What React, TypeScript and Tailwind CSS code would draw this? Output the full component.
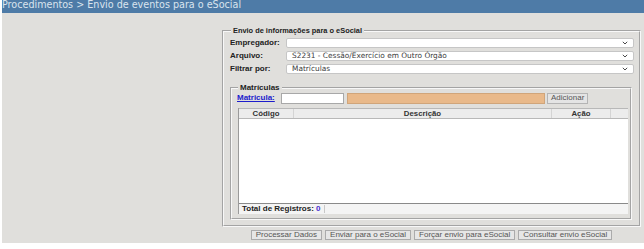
import React from 'react';

const rows = [
  { label: 'Empregador:', value: '' },
  { label: 'Arquivo:', value: 'S2231 - Cessão/Exercício em Outro Órgão' },
  { label: 'Filtrar por:', value: 'Matrículas' },
];

const actions = ['Processar Dados', 'Enviar para o eSocial', 'Forçar envio para eSocial', 'Consultar envio eSocial'];

function Chevron() {
  return (
    <svg width="6" height="4" viewBox="0 0 6 4" className="shrink-0">
      <path d="M0.8 0.8 L3 3 L5.2 0.8" fill="none" stroke="#4a4a4a" strokeWidth="1" />
    </svg>
  );
}

function SelectBox({ value }: { value: string }) {
  return (
    <div className="flex-1 h-[10px] flex items-center justify-between bg-white border border-[#c6c6c6] rounded-[2px] pl-[5px] pr-[5px]">
      <span className="font-['DejaVu_Sans',sans-serif] text-[7.4px] leading-none text-[#3a3a3a]">{value}</span>
      <Chevron />
    </div>
  );
}

export default function App() {
  return (
    <div className="w-[644px] h-[249px] bg-white pl-[2px] font-['Liberation_Sans',Arial,sans-serif]">
      {/* Header */}
      <header className="h-[13px] bg-[#4e7ba7] overflow-hidden">
        <p className="font-['DejaVu_Sans',sans-serif] text-[9.6px] leading-[10px] text-[#dae4ee] whitespace-nowrap">
          Procedimentos &gt; Envio de eventos para o eSocial
        </p>
      </header>

      {/* Main */}
      <main className="h-[230px] bg-[#e0dfdc] pt-[13px] pl-[220px] pr-[3px]">
        <fieldset className="[border-style:groove] [border-width:2px] border-[#f8f8f8] pl-[6px] pr-[5px] pb-[5px]">
          <legend className="ml-[1px] px-[2px] text-[7.4px] font-bold leading-[9px] text-[#222]">
            Envio de informações para o eSocial
          </legend>

          <div className="flex flex-col gap-[3px] pt-[3px]">
            {rows.map((row) => (
              <div key={row.label} className="flex items-center">
                <span className="w-[56px] shrink-0 text-[8px] font-bold leading-none text-[#222]">{row.label}</span>
                <SelectBox value={row.value} />
              </div>
            ))}
          </div>

          {/* Matrículas */}
          <fieldset className="mt-[9px] mr-[2px] [border-style:groove] [border-width:2px] border-[#f8f8f8] pl-[5px] pr-[2px] pb-[4px]">
            <legend className="ml-[1px] px-[2px] text-[8px] font-bold leading-[9px] text-[#222]">Matrículas</legend>

            <div className="flex items-center h-[11px] pt-[1px]">
              <a className="w-[44px] shrink-0 text-[8px] font-bold leading-none text-[#1c1ccc] underline">Matricula:</a>
              <div className="w-[63px] h-[11px] bg-white border border-[#a8a8a8]" />
              <div className="ml-[3px] w-[198px] h-[11px] bg-[#e9b98a] border border-[#d0a57a]" />
              <button className="ml-[2px] h-[11px] px-[3px] bg-[#e4e4e4] border border-[#b4b4b4] text-[8px] leading-none text-[#555]">
                Adicionar
              </button>
            </div>

            {/* Table */}
            <div className="mt-[5px] ml-[1px] h-[106px] flex flex-col border-l border-[#9a9a9a] bg-white">
              <div className="h-[11px] flex border-y border-[#b8b8b8] bg-[#ececec] text-[7.8px] font-bold leading-none text-[#333]">
                <div className="w-[55px] flex items-center justify-center border-r border-[#d4d4d4]">Código</div>
                <div className="flex-1 flex items-center justify-center border-r border-[#d4d4d4]">Descrição</div>
                <div className="w-[59px] flex items-center justify-center border-r border-[#d4d4d4]">Ação</div>
                <div className="w-[17px]" />
              </div>
              <div className="flex-1 bg-white" />
              <div className="h-[11px] flex items-center border-t border-[#8a8a8a] bg-[#f4f4f4] pl-[3px] text-[8px] font-bold leading-none text-[#222]">
                Total de Registros:&nbsp;<span className="text-[#4a2fd2]">0</span>
                <span className="ml-[3px] w-px h-[8px] bg-[#c8c8c8]" />
              </div>
            </div>
          </fieldset>
        </fieldset>

        {/* Actions */}
        <div className="mt-[3px] flex justify-center gap-[3px]">
          {actions.map((label) => (
            <button
              key={label}
              className="h-[10px] px-[4px] flex items-center bg-[#e6e6e6] border border-[#ababab] text-[8px] leading-none text-[#555]"
            >
              {label}
            </button>
          ))}
        </div>
      </main>
    </div>
  );
}
